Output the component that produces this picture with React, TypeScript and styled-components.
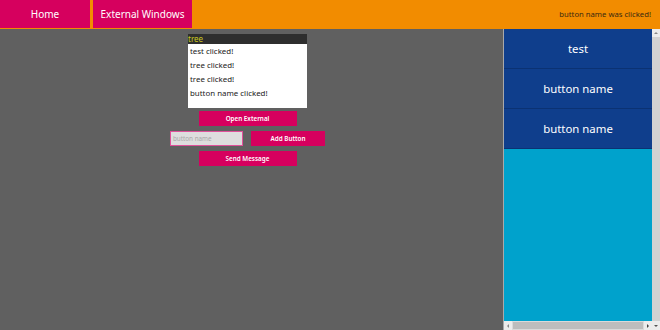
import React from "react";
import styled, { createGlobalStyle } from "styled-components";

const Global = createGlobalStyle`
  html, body { margin: 0; padding: 0; height: 100%; }
  body { background: #606060; font-family: "Noto Sans", "Open Sans", sans-serif; overflow: hidden; }
  #root { height: 100%; }
`;

const Page = styled.div`
  display: flex;
  flex-direction: column;
  width: 660px;
  height: 330px;
`;

const Header = styled.header`
  display: flex;
  align-items: flex-start;
  height: 29px;
  background: #f28c00;
  gap: 3px;
  flex-shrink: 0;
`;

const Tab = styled.div<{ $w: number }>`
  width: ${(p) => p.$w}px;
  height: 28px;
  background: #d6005e;
  color: #fff;
  font-size: 10px;
  display: flex;
  align-items: center;
  justify-content: center;
`;

const Status = styled.div`
  margin-left: auto;
  height: 28px;
  display: flex;
  align-items: center;
  padding-right: 9px;
  font-size: 7.7px;
  color: #3a2a10;
`;

const Body = styled.div`
  flex: 1;
  display: flex;
  min-height: 0;
`;

const Left = styled.main`
  width: 495px;
  display: flex;
  flex-direction: column;
  align-items: center;
  padding-top: 5px;
  margin-right: 8px;
`;

const List = styled.div`
  width: 119px;
  height: 74px;
  background: #fff;
  display: flex;
  flex-direction: column;
`;

const Item = styled.div<{ $sel?: boolean }>`
  height: ${(p) => (p.$sel ? 10 : 14)}px;
  line-height: ${(p) => (p.$sel ? 10 : 14)}px;
  padding-left: ${(p) => (p.$sel ? 0 : 2)}px;
  font-size: ${(p) => (p.$sel ? 8 : 7.9)}px;
  background: ${(p) => (p.$sel ? "#2e2e2e" : "#fff")};
  color: ${(p) => (p.$sel ? "#c8c820" : "#222")};
  white-space: nowrap;
`;

const Btn = styled.button<{ $w: number; $mt?: number }>`
  width: ${(p) => p.$w}px;
  height: 15px;
  margin-top: ${(p) => p.$mt ?? 0}px;
  border: none;
  padding: 0;
  background: #d6005e;
  color: #fff;
  font-family: "Noto Sans", sans-serif;
  font-size: 6.3px;
  font-weight: 600;
`;

const Row = styled.div`
  display: flex;
  gap: 8px;
  margin-top: 5px;
`;

const Input = styled.input`
  box-sizing: border-box;
  width: 73px;
  height: 15px;
  border: 1px solid #e0509a;
  background: #dedede;
  font-family: "Noto Sans", sans-serif;
  font-size: 6.3px;
  color: #999;
  padding: 0 2px;
  outline: none;
  &::placeholder { color: #a8a8a8; }
`;

const Side = styled.aside`
  flex: 1;
  border-left: 1px solid #a9a9a9;
  display: grid;
  grid-template-columns: 1fr 8px;
  grid-template-rows: 1fr 9px;
  min-height: 0;
`;

const SideContent = styled.div`
  background: #00a2cc;
  display: flex;
  flex-direction: column;
  overflow: hidden;
`;

const WinBtn = styled.div`
  height: 39px;
  background: #0f3e8c;
  border-bottom: 1px solid #0b3273;
  color: #fff;
  font-size: 11.4px;
  display: flex;
  align-items: center;
  justify-content: center;
`;

const VBar = styled.div`
  background: #d2d2d2;
  display: flex;
  flex-direction: column;
`;

const HBar = styled.div`
  background: #dadada;
  display: flex;
  align-items: stretch;
`;

const ArrowBtn = styled.div<{ $w: number; $h: number }>`
  width: ${(p) => p.$w}px;
  height: ${(p) => p.$h}px;
  background: #ececec;
  display: flex;
  align-items: center;
  justify-content: center;
  flex-shrink: 0;
`;

const Tri = styled.div<{ $dir: "up" | "down" | "left" | "right" }>`
  width: 0;
  height: 0;
  ${(p) =>
    p.$dir === "up"
      ? "border-left: 2px solid transparent; border-right: 2px solid transparent; border-bottom: 2px solid #888;"
      : p.$dir === "down"
      ? "border-left: 2px solid transparent; border-right: 2px solid transparent; border-top: 2px solid #555;"
      : p.$dir === "left"
      ? "border-top: 2px solid transparent; border-bottom: 2px solid transparent; border-right: 2px solid #888;"
      : "border-top: 2px solid transparent; border-bottom: 2px solid transparent; border-left: 2px solid #444;"}
`;

const Thumb = styled.div`
  flex: 1;
  margin: 1px 1px;
  background: #bdbdbd;
`;

const Corner = styled.div`
  background: #ececec;
  display: flex;
  align-items: center;
  justify-content: center;
`;

export default function App() {
  const items = ["test clicked!", "tree clicked!", "tree clicked!", "button name clicked!"];
  return (
    <Page>
      <Global />
      <Header>
        <Tab $w={90}>Home</Tab>
        <Tab $w={99}>External Windows</Tab>
        <Status>button name was clicked!</Status>
      </Header>
      <Body>
        <Left>
          <List>
            <Item $sel>tree</Item>
            {items.map((t, i) => (
              <Item key={i}>{t}</Item>
            ))}
          </List>
          <Btn $w={98} $mt={3}>Open External</Btn>
          <Row>
            <Input placeholder="button name" />
            <Btn $w={74}>Add Button</Btn>
          </Row>
          <Btn $w={98} $mt={5}>Send Message</Btn>
        </Left>
        <Side>
          <SideContent>
            <WinBtn>test</WinBtn>
            <WinBtn>button name</WinBtn>
            <WinBtn>button name</WinBtn>
          </SideContent>
          <VBar>
            <ArrowBtn $w={8} $h={8}>
              <Tri $dir="up" />
            </ArrowBtn>
          </VBar>
          <HBar>
            <ArrowBtn $w={8} $h={9}>
              <Tri $dir="left" />
            </ArrowBtn>
            <Thumb />
            <ArrowBtn $w={8} $h={9}>
              <Tri $dir="right" />
            </ArrowBtn>
          </HBar>
          <Corner>
            <Tri $dir="down" />
          </Corner>
        </Side>
      </Body>
    </Page>
  );
}
